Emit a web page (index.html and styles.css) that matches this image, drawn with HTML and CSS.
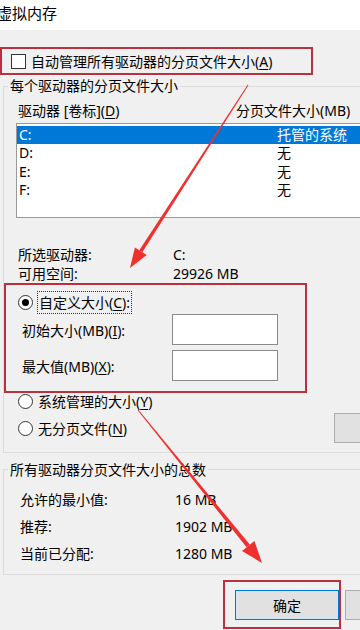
FILE: index.html
```html
<!DOCTYPE html>
<html lang="zh-CN">
<head>
    <meta charset="UTF-8">
    <meta name="viewport" content="width=device-width, initial-scale=1.0">
    <title>虚拟内存</title>
    <link rel="stylesheet" href="styles.css">
</head>
<body>
    <div class="dialog">
        <div class="titlebar">虚拟内存</div>

        <div class="auto mark">
            <span class="check"></span>
            <span>自动管理所有驱动器的分页文件大小(<u>A</u>)</span>
        </div>

        <fieldset class="group drives">
            <legend>每个驱动器的分页文件大小</legend>
            <div class="head">
                <span>驱动器 [卷标](<u>D</u>)</span>
                <span>分页文件大小(MB)</span>
            </div>
            <div class="list">
                <div class="row sel"><span>C:</span><span>托管的系统</span></div>
                <div class="row"><span>D:</span><span>无</span></div>
                <div class="row"><span>E:</span><span>无</span></div>
                <div class="row"><span>F:</span><span>无</span></div>
            </div>
            <div class="info">
                <span>所选驱动器:</span><span>C:</span>
                <span>可用空间:</span><span>29926 MB</span>
            </div>

            <div class="custom mark">
                <div class="radio-row first">
                    <span class="radio on"></span>
                    <span class="focus">自定义大小(<u>C</u>):</span>
                </div>
                <div class="field">
                    <span class="label">初始大小(MB)(<u>I</u>):</span>
                    <span class="input"></span>
                </div>
                <div class="field second">
                    <span class="label">最大值(MB)(<u>X</u>):</span>
                    <span class="input"></span>
                </div>
            </div>

            <div class="options">
                <div class="radios">
                    <div class="radio-row"><span class="radio"></span><span>系统管理的大小(<u>Y</u>)</span></div>
                    <div class="radio-row"><span class="radio"></span><span>无分页文件(<u>N</u>)</span></div>
                </div>
                <div class="btn set"></div>
            </div>
        </fieldset>

        <fieldset class="group totals">
            <legend>所有驱动器分页文件大小的总数</legend>
            <div class="info sums">
                <span>允许的最小值:</span><span>16 MB</span>
                <span>推荐:</span><span>1902 MB</span>
                <span>当前已分配:</span><span>1280 MB</span>
            </div>
        </fieldset>

        <div class="actions">
            <div class="ok-wrap mark">
                <div class="btn ok">确定</div>
            </div>
            <div class="btn cancel"></div>
        </div>
    </div>

    <svg class="arrows" width="360" height="630" viewBox="0 0 360 630">
        <polygon points="248.4,85.3 247.6,84.7 139.3,250.2 142.3,252.2" />
        <polygon points="130,268 134.9,247.4 146.7,255.0" />
        <polygon points="138.4,409.7 137.6,410.3 246.6,547.2 249.8,544.6" />
        <polygon points="262,563 242.0,550.9 254.4,540.9" />
    </svg>
</body>
</html>
```

FILE: styles.css
```css
* {
    box-sizing: border-box;
}

body {
    margin: 0;
    width: 360px;
    height: 630px;
    overflow: hidden;
    position: relative;
    background: #f0f0f0;
    color: #000;
    font-family: "Noto Sans", "Noto Sans CJK SC", sans-serif;
    font-size: 14px;
}

u {
    text-underline-offset: 2px;
}

.dialog {
    width: 420px;
}

.titlebar {
    height: 30px;
    background: #fff;
    font-size: 15px;
    line-height: 26px;
    text-indent: -3px;
}

.mark {
    border: 2px solid #b8313f;
}

/* auto manage checkbox */
.auto {
    width: 313px;
    height: 28px;
    margin-top: 17px;
    padding-left: 9px;
    display: flex;
    align-items: center;
    gap: 5px;
}

.check {
    width: 15px;
    height: 15px;
    border: 1px solid #333;
    background: #fff;
}

/* group boxes */
.group {
    margin: 0 0 0 3px;
    padding: 0;
    border: 1px solid #dcdcdc;
    min-width: 0;
}

.group legend {
    margin-left: 4px;
    padding: 0 2px;
    line-height: 18px;
}

.drives {
    margin-top: 2px;
    padding: 7px 0 9px 0;
}

.head {
    display: grid;
    grid-template-columns: 218px auto;
    padding-left: 14px;
    line-height: 18px;
}

.list {
    margin: 3px 0 0 12px;
    height: 95px;
    border: 1px solid #999;
    background: #fff;
    padding-top: 1.5px;
}

.row {
    display: grid;
    grid-template-columns: 258px auto;
    height: 18.5px;
    line-height: 18.5px;
    padding-left: 2px;
}

.row.sel {
    background: #0078d7;
    color: #fff;
}

.info {
    display: grid;
    grid-template-columns: 155px auto;
    margin-top: 26.5px;
    padding-left: 14px;
    line-height: 19px;
}

/* custom size box */
.custom {
    width: 303px;
    height: 110px;
    padding-top: 6px;
}

.radio-row {
    display: flex;
    align-items: center;
    gap: 5px;
    padding-left: 12px;
    line-height: 18px;
}

.radio-row.first {
    height: 23px;
    gap: 4px;
}

.radio {
    width: 15px;
    height: 15px;
    border: 1px solid #333;
    border-radius: 50%;
    background: #fff;
    display: flex;
    align-items: center;
    justify-content: center;
}

.radio.on::after {
    content: "";
    width: 7px;
    height: 7px;
    border-radius: 50%;
    background: #000;
}

.focus {
    border: 1px dotted #333;
    padding: 1px 1px;
    line-height: 19px;
}

.field {
    display: grid;
    grid-template-columns: 150px 106px;
    padding-left: 16px;
    height: 31px;
}

.field.second {
    margin-top: 5px;
}

.label {
    padding-top: 5px;
    line-height: 23px;
}

.input {
    border: 1px solid #8a8a8a;
    background: #fff;
}

.options {
    display: flex;
    align-items: flex-start;
}

.radios {
    width: 330px;
    display: flex;
    flex-direction: column;
    gap: 9px;
    padding-left: 2px;
}

.btn {
    height: 30px;
    background: #e1e1e1;
    border: 1px solid #adadad;
    display: flex;
    align-items: center;
    justify-content: center;
}

.set {
    width: 80px;
    margin-top: 20px;
}

/* totals */
.totals {
    margin-top: 8px;
    padding: 7.5px 0 6.5px 0;
}

.sums {
    margin-top: 0;
    padding-left: 16px;
    line-height: 27px;
}

/* buttons */
.actions {
    display: flex;
    align-items: flex-start;
    margin-top: 5px;
    padding-left: 223px;
    gap: 4px;
}

.ok-wrap {
    width: 122px;
    height: 49px;
    padding: 8px 0 0 10px;
}

.ok {
    width: 104px;
    border: 1px solid #0078d7;
    box-shadow: inset 0 0 0 1px #cde6f7;
}

.cancel {
    width: 80px;
    margin-top: 10px;
}

.arrows {
    position: absolute;
    left: 0;
    top: 0;
    pointer-events: none;
}

.arrows polygon {
    fill: #f0302c;
}
```
